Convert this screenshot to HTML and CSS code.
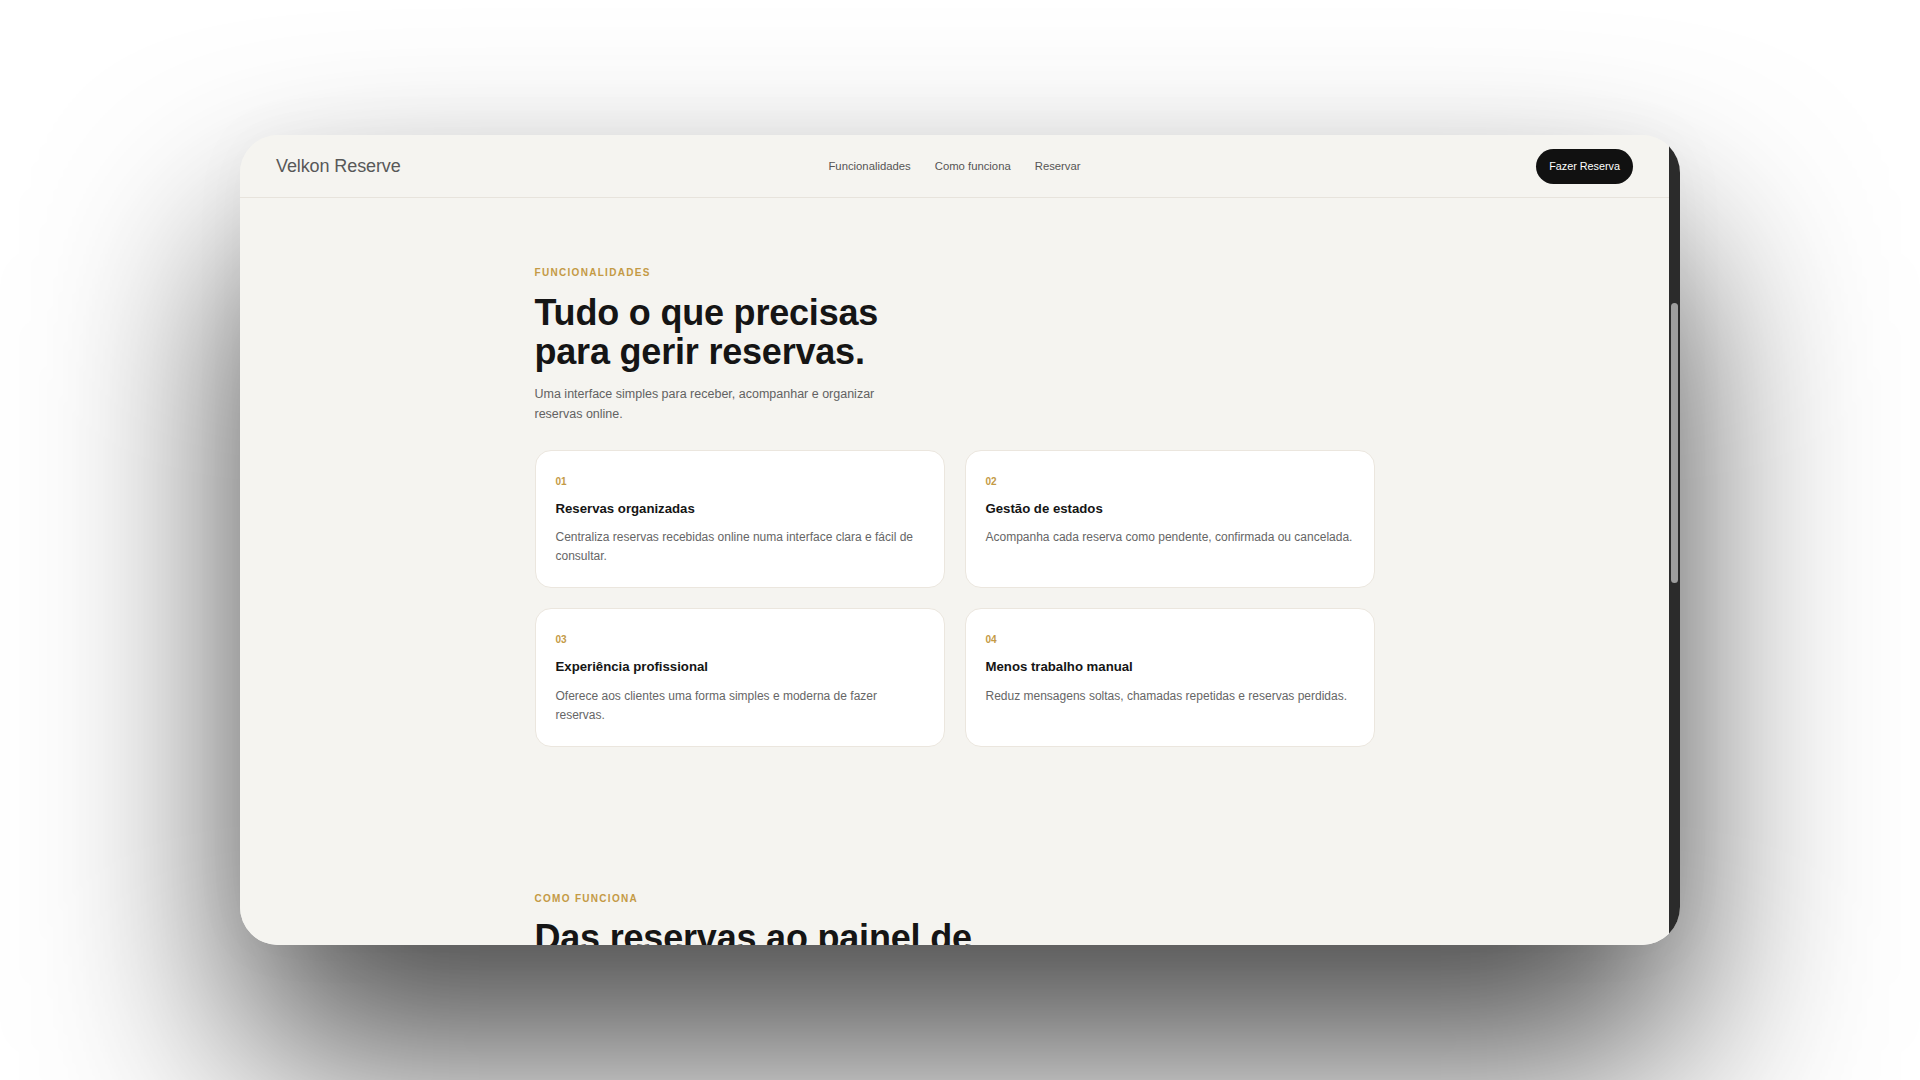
FILE: index.html
```html
<!DOCTYPE html>
<html lang="pt">
<head>
<meta charset="utf-8">
<title>Velkon Reserve</title>
<link rel="stylesheet" href="styles.css">
</head>
<body>
<div class="stage">
  <div class="device">
    <div class="viewport">
      <header class="topbar">
        <div class="brand">Velkon Reserve</div>
        <nav class="nav">
          <a href="#funcionalidades">Funcionalidades</a>
          <a href="#como-funciona">Como funciona</a>
          <a href="#reservar">Reservar</a>
        </nav>
        <a class="cta" href="#reservar">Fazer Reserva</a>
      </header>

      <section class="section" id="funcionalidades">
        <div class="container">
          <div class="eyebrow">FUNCIONALIDADES</div>
          <h2 class="title">Tudo o que precisas<br>para gerir reservas.</h2>
          <p class="lead">Uma interface simples para receber, acompanhar e organizar reservas online.</p>
          <div class="cards">
            <div class="card">
              <div class="num">01</div>
              <h3 class="card-title">Reservas organizadas</h3>
              <p class="card-text">Centraliza reservas recebidas online numa interface clara e fácil de consultar.</p>
            </div>
            <div class="card">
              <div class="num">02</div>
              <h3 class="card-title">Gestão de estados</h3>
              <p class="card-text">Acompanha cada reserva como pendente, confirmada ou cancelada.</p>
            </div>
            <div class="card">
              <div class="num">03</div>
              <h3 class="card-title">Experiência profissional</h3>
              <p class="card-text">Oferece aos clientes uma forma simples e moderna de fazer reservas.</p>
            </div>
            <div class="card">
              <div class="num">04</div>
              <h3 class="card-title">Menos trabalho manual</h3>
              <p class="card-text">Reduz mensagens soltas, chamadas repetidas e reservas perdidas.</p>
            </div>
          </div>
        </div>
      </section>

      <section class="section" id="como-funciona">
        <div class="container">
          <div class="eyebrow">COMO FUNCIONA</div>
          <h2 class="title wide">Das reservas ao painel de controlo.</h2>
        </div>
      </section>
    </div>
    <div class="scrollbar"><div class="thumb"></div></div>
  </div>
</div>
</body>
</html>
```

FILE: styles.css
```css
* { box-sizing: border-box; }

html, body {
  margin: 0;
  padding: 0;
  height: 1080px;
  overflow: hidden;
  background: #ffffff;
  font-family: "Liberation Sans", Arial, Helvetica, sans-serif;
}

.stage {
  display: flex;
  justify-content: center;
  padding-top: 135px;
}

.device {
  width: 1440px;
  height: 810px;
  border-radius: 38px;
  overflow: hidden;
  display: flex;
  background: #f5f4f0;
  box-shadow: 0 113px 200px rgba(0, 0, 0, 0.7), 0 0 60px rgba(0, 0, 0, 0.04);
}

.viewport {
  flex: 1;
  background: #f5f4f0;
  overflow: hidden;
}

.scrollbar {
  width: 11px;
  background: #2b2b2b;
  padding-top: 168px;
  padding-left: 2px;
}

.thumb {
  width: 7px;
  height: 280px;
  border-radius: 4px;
  background: #9e9e9e;
}

/* header */
.topbar {
  height: 63px;
  border-bottom: 1px solid #e7e3dc;
  display: grid;
  grid-template-columns: 1fr auto 1fr;
  align-items: center;
  padding: 0 36px;
}

.brand {
  font-size: 18px;
  color: #585858;
  letter-spacing: -0.1px;
}

.nav {
  display: flex;
  gap: 24px;
}

.nav a {
  font-size: 11.3px;
  color: #555555;
  text-decoration: none;
}

.cta {
  justify-self: end;
  height: 35px;
  padding: 0 13px;
  display: flex;
  align-items: center;
  border-radius: 999px;
  background: #111111;
  color: #ffffff;
  font-size: 10.8px;
  text-decoration: none;
}

/* sections */
.section {
  padding: 69px 0 77px;
}

.container {
  width: 840px;
  margin: 0 auto;
}

.eyebrow {
  font-size: 10px;
  line-height: 12px;
  font-weight: 700;
  letter-spacing: 1.3px;
  color: #c49a45;
}

.title {
  margin: 13.7px 0 0;
  font-size: 36px;
  line-height: 39.6px;
  font-weight: 700;
  letter-spacing: -0.2px;
  color: #151515;
}

.title.wide {
  max-width: 480px;
}

.lead {
  margin: 13.6px 0 0;
  max-width: 370px;
  font-size: 12.5px;
  line-height: 19.3px;
  color: #626262;
}

.cards {
  margin-top: 26px;
  display: grid;
  grid-template-columns: 1fr 1fr;
  gap: 20px;
}

.card {
  background: #ffffff;
  border: 1px solid #ebe6de;
  border-radius: 16px;
  padding: 24.5px 20px 21px;
}

.num {
  font-size: 10px;
  line-height: 12px;
  font-weight: 700;
  color: #c49a45;
}

.card-title {
  margin: 13px 0 0;
  font-size: 13.2px;
  line-height: 16px;
  font-weight: 700;
  color: #151515;
}

.card-text {
  margin: 11.8px 0 0;
  font-size: 12px;
  line-height: 19px;
  color: #666666;
}
```
